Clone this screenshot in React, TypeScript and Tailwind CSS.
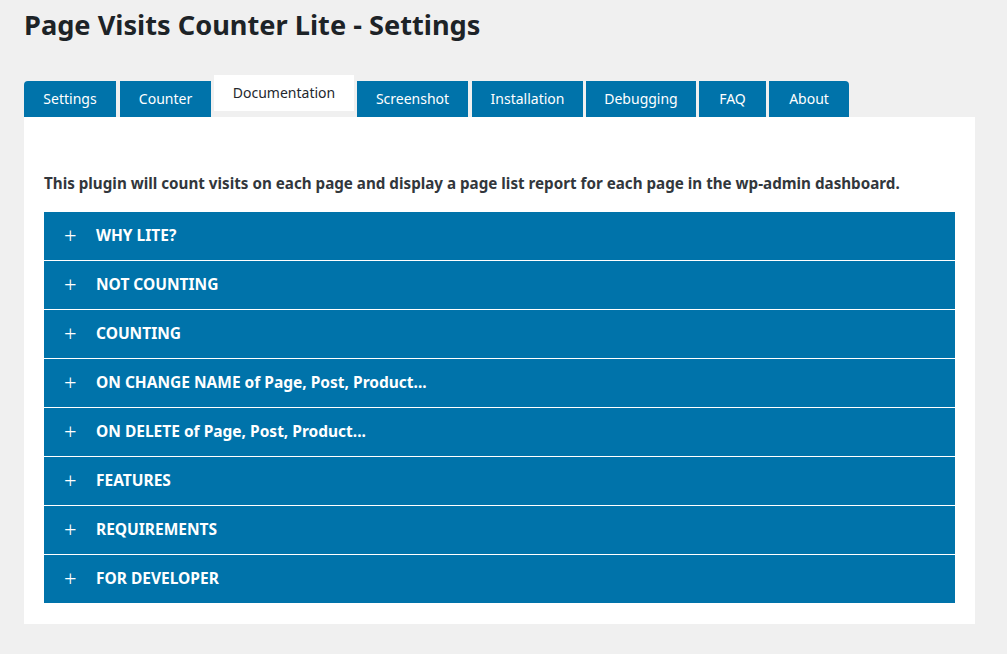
const tabs = [
  { label: "Settings", w: "w-[92px]", first: true },
  { label: "Counter", w: "w-[91px] ml-[4px]" },
  { label: "Documentation", w: "w-[140px] ml-[3px]", active: true },
  { label: "Screenshot", w: "w-[111px] ml-[3px]" },
  { label: "Installation", w: "w-[111px] ml-[4px]" },
  { label: "Debugging", w: "w-[110px] ml-[3px]" },
  { label: "FAQ", w: "w-[67px] ml-[3px]" },
  { label: "About", w: "w-[80px] ml-[3px]", last: true },
];

const sections = [
  "WHY LITE?",
  "NOT COUNTING",
  "COUNTING",
  "ON CHANGE NAME of Page, Post, Product...",
  "ON DELETE of Page, Post, Product...",
  "FEATURES",
  "REQUIREMENTS",
  "FOR DEVELOPER",
];

export default function App() {
  return (
    <div className="min-h-[654px] w-[1007px] bg-[#f0f0f0] font-['Noto_Sans',sans-serif] text-[#23282d]">
      <div className="pl-6 pr-8">
        <h1 className="pt-[7px] text-[27.2px] font-bold leading-[36px] text-[#1d2327]">
          Page Visits Counter Lite - Settings
        </h1>

        <div className="mt-[32px] flex items-end">
          {tabs.map((t) =>
            t.active ? (
              <div key={t.label} className={`${t.w} flex h-[42px] flex-col`}>
                <div className="flex h-[36px] items-center justify-center bg-white pb-[2px] text-[14px] text-[#23282d]">
                  {t.label}
                </div>
                <div className="h-[6px]" />
              </div>
            ) : (
              <div
                key={t.label}
                className={`${t.w} flex h-[36px] items-center justify-center bg-[#0073aa] pb-[2px] text-[14px] text-white ${t.first ? "rounded-tl-[4px]" : ""} ${t.last ? "rounded-tr-[4px]" : ""}`}
              >
                {t.label}
              </div>
            )
          )}
        </div>

        <div className="w-[951px] bg-white px-5 pt-[55px] pb-[21px]">
          <p className="text-[15.2px] font-bold leading-[22px] text-[#32373c]">
            This plugin will count visits on each page and display a page list report for each page in the wp-admin dashboard.
          </p>
          <div className="mt-[18px] flex flex-col gap-px">
            {sections.map((s) => (
              <div key={s} className="flex h-[48px] items-center bg-[#0073aa] text-white">
                <span className="w-[52px] pb-[2px] pl-[20px] text-[22px] font-light leading-none">+</span>
                <span className="pb-[1px] text-[15.5px] font-bold">{s}</span>
              </div>
            ))}
          </div>
        </div>
      </div>
    </div>
  );
}
